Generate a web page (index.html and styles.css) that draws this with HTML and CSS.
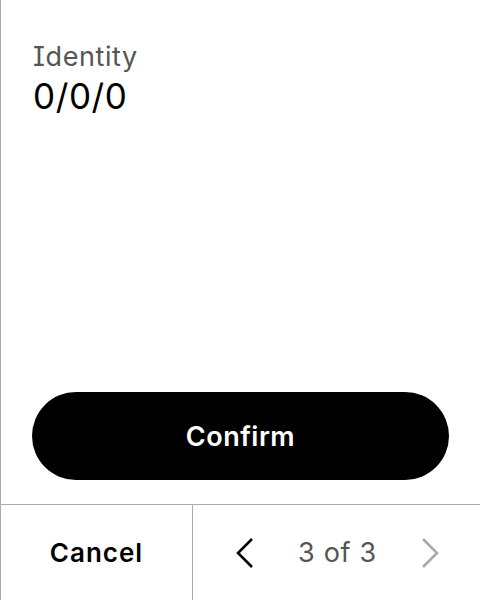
FILE: index.html
```html
<!DOCTYPE html>
<html>
<head>
<meta charset="utf-8">
<link rel="stylesheet" href="styles.css">
</head>
<body>
<div class="screen">
  <div class="content">
    <div class="label">Identity</div>
    <div class="value">0/0/0</div>
  </div>
  <div class="actions">
    <button class="confirm">Confirm</button>
  </div>
  <div class="footer">
    <div class="cancel">Cancel</div>
    <div class="pager">
      <svg class="chev" width="20" height="32" viewBox="0 0 20 32"><path d="M17 2 L3 16 L17 30" fill="none" stroke="#000" stroke-width="2.6"/></svg>
      <span class="count">3 of 3</span>
      <svg class="chev" width="20" height="32" viewBox="0 0 20 32"><path d="M3 2 L17 16 L3 30" fill="none" stroke="#aaa" stroke-width="2.6"/></svg>
    </div>
  </div>
</div>
</body>
</html>
```
FILE: styles.css
```css
html, body { margin: 0; padding: 0; background: #fff; }
body { font-family: Inter, "Noto Sans", sans-serif; font-feature-settings: "cv08" 1; }
.screen {
  width: 479px; height: 600px;
  border-left: 1px solid #aaa;
  display: flex; flex-direction: column;
}
.content { flex: 1; padding: 40px 32px 0 32px; }
.label { font-size: 27px; color: #555; line-height: 34px; letter-spacing: 0.6px; }
.value { font-size: 35px; color: #000; line-height: 40px; margin-top: 2px; letter-spacing: 0.6px; }
.actions { padding: 0 31px 24px 31px; }
.confirm {
  width: 100%; height: 88px; border: none; border-radius: 44px;
  background: #000; color: #fff; font-family: inherit;
  font-size: 27px; font-weight: 600; display: block; letter-spacing: 0.5px;
}
.footer { height: 95px; border-top: 1px solid #aaa; display: flex; }
.cancel {
  width: 191px; border-right: 1px solid #aaa;
  display: flex; align-items: center; justify-content: center;
  font-size: 26px; font-weight: 600; color: #000; letter-spacing: 1px;
}
.pager { flex: 1; display: flex; align-items: center; justify-content: space-between; padding: 0 40px 0 42px; }
.count { font-size: 27px; color: #555; letter-spacing: 0.7px; }
.chev { display: block; }
```
